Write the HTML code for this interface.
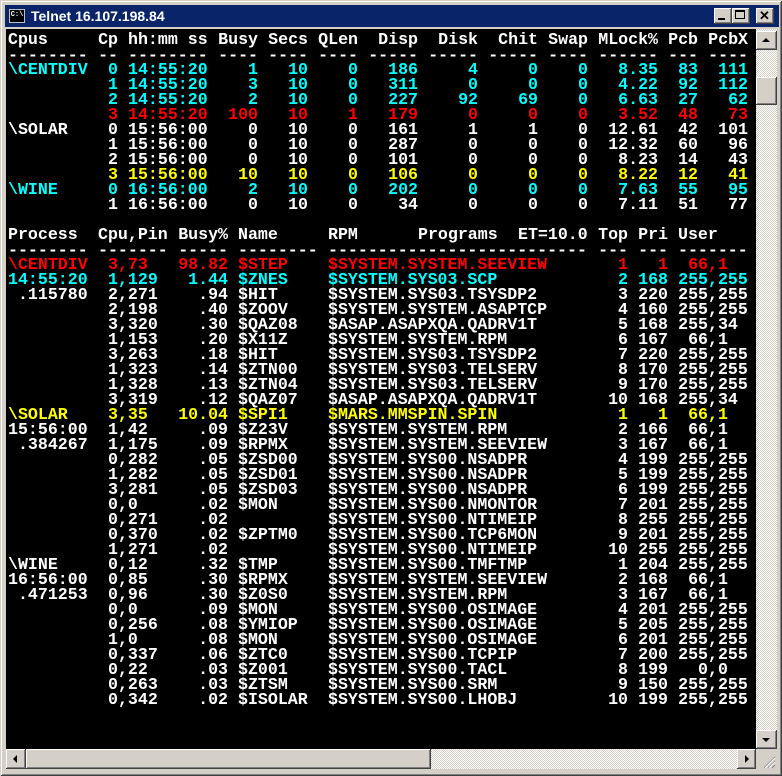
<!DOCTYPE html>
<html><head><meta charset="utf-8"><style>
*{margin:0;padding:0;box-sizing:border-box}
html,body{width:782px;height:776px;overflow:hidden;background:#d4d0c8;font-family:"Liberation Sans",sans-serif}
#win{position:absolute;left:0;top:0;width:782px;height:776px;background:#d4d0c8;border-top:1px solid #d4d0c8;border-left:1px solid #d4d0c8;box-shadow:inset -1px -1px 0 #404040,inset 1px 1px 0 #fff,inset -2px -2px 0 #808080}
#title{position:absolute;left:4px;top:4px;width:774px;height:22px;background:#0a246a}
#title .t{position:absolute;left:26px;top:3px;color:#fff;font-weight:bold;font-size:14px}
#icon{position:absolute;left:4px;top:4px;width:16px;height:14px;background:#000;border:1px solid #c0c0c0;color:#fff;font:bold 7px "Liberation Mono",monospace;line-height:11px;text-align:center}
.btn{position:absolute;top:3px;width:18px;height:16px;background:#d4d0c8;box-shadow:inset -1px -1px 0 #404040,inset 1px 1px 0 #fff,inset -2px -2px 0 #808080}
#term{position:absolute;left:5px;top:28px;width:750px;height:720px;background:#000;overflow:hidden;font-family:"Liberation Mono",monospace;font-weight:bold;font-size:16.6px;line-height:15px;color:#fff}
.r{position:absolute;left:0;height:15px;width:750px}
.r span{position:absolute;top:0;white-space:pre;height:15px}
.r.dash span{top:1px}
.C{color:#00ffff}.R{color:#ff0000}.Y{color:#ffff00}
.a{left:2px;width:90px}.b{left:92px;width:20px;text-align:right}.c{left:122px;width:80px}
.d{left:212px;width:40px;text-align:right}.e{left:262px;width:40px;text-align:right}.f{left:312px;width:40px;text-align:right}
.g{left:362px;width:50px;text-align:right}.h{left:422px;width:50px;text-align:right}.i{left:482px;width:50px;text-align:right}
.j{left:542px;width:40px;text-align:right}.k{left:592px;width:60px;text-align:right}.m{left:662px;width:30px;text-align:right}.n{left:702px;width:40px;text-align:right}
.p{left:2px;width:90px}.q{left:102px;width:60px}.q2{left:92px;width:70px}.s{left:172px;width:50px;text-align:right}
.u{left:232px;width:90px}.v{left:322px;width:260px}.pr{left:412px;width:80px}.et{left:512px;width:70px}
.w{left:592px;width:30px;text-align:right}.x{left:632px;width:30px;text-align:right}.y{left:672px;width:30px;text-align:right}.z{left:702px;width:40px}.uu{left:672px;width:70px}
#vs{position:absolute;left:755px;top:28px;width:21px;height:720px;background:#e8e6e2;background-image:repeating-conic-gradient(#d4d0c8 0 25%,#fff 0 50%);background-size:2px 2px}
#hs{position:absolute;left:5px;top:748px;width:750px;height:20px;background-image:repeating-conic-gradient(#d4d0c8 0 25%,#fff 0 50%);background-size:2px 2px}
.sb{position:absolute;background:#d4d0c8;box-shadow:inset -1px -1px 0 #404040,inset 1px 1px 0 #fff,inset -2px -2px 0 #808080}
.tri{position:absolute;width:0;height:0}
#grip{position:absolute;left:755px;top:748px;width:21px;height:20px;background:#d4d0c8}
</style></head><body>
<div id="win">
<div id="title"><div id="icon">C:\</div><div class="t">Telnet 16.107.198.84</div>
<div class="btn" style="left:709px"><div style="position:absolute;left:4px;top:10px;width:7px;height:2px;background:#000"></div></div>
<div class="btn" style="left:727px"><div style="position:absolute;left:3px;top:2px;width:10px;height:9px;border:1px solid #000;border-top-width:2px"></div></div>
<div class="btn" style="left:751px;width:18px"><div style="position:absolute;left:3px;top:0px;font:bold 13px 'Liberation Sans',sans-serif;color:#000">✕</div></div>
</div>

<div id="term">
<div class="r" style="top:3px"><span class="a">Cpus</span><span class="b">Cp</span><span class="c">hh:mm ss</span><span class="d">Busy</span><span class="e">Secs</span><span class="f">QLen</span><span class="g">Disp</span><span class="h">Disk</span><span class="i">Chit</span><span class="j">Swap</span><span class="k">MLock%</span><span class="m">Pcb</span><span class="n">PcbX</span></div>
<div class="r dash" style="top:18px"><span class="a">--------</span><span class="b">--</span><span class="c">--------</span><span class="d">----</span><span class="e">----</span><span class="f">----</span><span class="g">-----</span><span class="h">-----</span><span class="i">-----</span><span class="j">----</span><span class="k">------</span><span class="m">---</span><span class="n">----</span></div>
<div class="r C" style="top:33px"><span class="a">\CENTDIV</span><span class="b">0</span><span class="c">14:55:20</span><span class="d">1</span><span class="e">10</span><span class="f">0</span><span class="g">186</span><span class="h">4</span><span class="i">0</span><span class="j">0</span><span class="k">8.35</span><span class="m">83</span><span class="n">111</span></div>
<div class="r C" style="top:48px"><span class="b">1</span><span class="c">14:55:20</span><span class="d">3</span><span class="e">10</span><span class="f">0</span><span class="g">311</span><span class="h">0</span><span class="i">0</span><span class="j">0</span><span class="k">4.22</span><span class="m">92</span><span class="n">112</span></div>
<div class="r C" style="top:63px"><span class="b">2</span><span class="c">14:55:20</span><span class="d">2</span><span class="e">10</span><span class="f">0</span><span class="g">227</span><span class="h">92</span><span class="i">69</span><span class="j">0</span><span class="k">6.63</span><span class="m">27</span><span class="n">62</span></div>
<div class="r R" style="top:78px"><span class="b">3</span><span class="c">14:55:20</span><span class="d">100</span><span class="e">10</span><span class="f">1</span><span class="g">179</span><span class="h">0</span><span class="i">0</span><span class="j">0</span><span class="k">3.52</span><span class="m">48</span><span class="n">73</span></div>
<div class="r" style="top:93px"><span class="a">\SOLAR</span><span class="b">0</span><span class="c">15:56:00</span><span class="d">0</span><span class="e">10</span><span class="f">0</span><span class="g">161</span><span class="h">1</span><span class="i">1</span><span class="j">0</span><span class="k">12.61</span><span class="m">42</span><span class="n">101</span></div>
<div class="r" style="top:108px"><span class="b">1</span><span class="c">15:56:00</span><span class="d">0</span><span class="e">10</span><span class="f">0</span><span class="g">287</span><span class="h">0</span><span class="i">0</span><span class="j">0</span><span class="k">12.32</span><span class="m">60</span><span class="n">96</span></div>
<div class="r" style="top:123px"><span class="b">2</span><span class="c">15:56:00</span><span class="d">0</span><span class="e">10</span><span class="f">0</span><span class="g">101</span><span class="h">0</span><span class="i">0</span><span class="j">0</span><span class="k">8.23</span><span class="m">14</span><span class="n">43</span></div>
<div class="r Y" style="top:138px"><span class="b">3</span><span class="c">15:56:00</span><span class="d">10</span><span class="e">10</span><span class="f">0</span><span class="g">106</span><span class="h">0</span><span class="i">0</span><span class="j">0</span><span class="k">8.22</span><span class="m">12</span><span class="n">41</span></div>
<div class="r C" style="top:153px"><span class="a">\WINE</span><span class="b">0</span><span class="c">16:56:00</span><span class="d">2</span><span class="e">10</span><span class="f">0</span><span class="g">202</span><span class="h">0</span><span class="i">0</span><span class="j">0</span><span class="k">7.63</span><span class="m">55</span><span class="n">95</span></div>
<div class="r" style="top:168px"><span class="b">1</span><span class="c">16:56:00</span><span class="d">0</span><span class="e">10</span><span class="f">0</span><span class="g">34</span><span class="h">0</span><span class="i">0</span><span class="j">0</span><span class="k">7.11</span><span class="m">51</span><span class="n">77</span></div>

<div class="r" style="top:198px"><span class="p">Process</span><span class="q2">Cpu,Pin</span><span class="s">Busy%</span><span class="u">Name</span><span class="v">RPM</span><span class="pr">Programs</span><span class="et">ET=10.0</span><span class="w">Top</span><span class="x">Pri</span><span class="uu">User</span></div>
<div class="r dash" style="top:213px"><span class="p">--------</span><span class="q2">-------</span><span class="s">-----</span><span class="u">--------</span><span class="v">--------------------------</span><span class="w">---</span><span class="x">---</span><span class="uu">-------</span></div>
<div class="r R" style="top:228px"><span class="p">\CENTDIV</span><span class="q">3,73</span><span class="s">98.82</span><span class="u">$STEP</span><span class="v">$SYSTEM.SYSTEM.SEEVIEW</span><span class="w">1</span><span class="x">1</span><span class="y">66</span><span class="z">,1</span></div>
<div class="r C" style="top:243px"><span class="p">14:55:20</span><span class="q">1,129</span><span class="s">1.44</span><span class="u">$ZNES</span><span class="v">$SYSTEM.SYS03.SCP</span><span class="w">2</span><span class="x">168</span><span class="y">255</span><span class="z">,255</span></div>
<div class="r" style="top:258px"><span class="p"> .115780</span><span class="q">2,271</span><span class="s">.94</span><span class="u">$HIT</span><span class="v">$SYSTEM.SYS03.TSYSDP2</span><span class="w">3</span><span class="x">220</span><span class="y">255</span><span class="z">,255</span></div>
<div class="r" style="top:273px"><span class="q">2,198</span><span class="s">.40</span><span class="u">$ZOOV</span><span class="v">$SYSTEM.SYSTEM.ASAPTCP</span><span class="w">4</span><span class="x">160</span><span class="y">255</span><span class="z">,255</span></div>
<div class="r" style="top:288px"><span class="q">3,320</span><span class="s">.30</span><span class="u">$QAZ08</span><span class="v">$ASAP.ASAPXQA.QADRV1T</span><span class="w">5</span><span class="x">168</span><span class="y">255</span><span class="z">,34</span></div>
<div class="r" style="top:303px"><span class="q">1,153</span><span class="s">.20</span><span class="u">$X11Z</span><span class="v">$SYSTEM.SYSTEM.RPM</span><span class="w">6</span><span class="x">167</span><span class="y">66</span><span class="z">,1</span></div>
<div class="r" style="top:318px"><span class="q">3,263</span><span class="s">.18</span><span class="u">$HIT</span><span class="v">$SYSTEM.SYS03.TSYSDP2</span><span class="w">7</span><span class="x">220</span><span class="y">255</span><span class="z">,255</span></div>
<div class="r" style="top:333px"><span class="q">1,323</span><span class="s">.14</span><span class="u">$ZTN00</span><span class="v">$SYSTEM.SYS03.TELSERV</span><span class="w">8</span><span class="x">170</span><span class="y">255</span><span class="z">,255</span></div>
<div class="r" style="top:348px"><span class="q">1,328</span><span class="s">.13</span><span class="u">$ZTN04</span><span class="v">$SYSTEM.SYS03.TELSERV</span><span class="w">9</span><span class="x">170</span><span class="y">255</span><span class="z">,255</span></div>
<div class="r" style="top:363px"><span class="q">3,319</span><span class="s">.12</span><span class="u">$QAZ07</span><span class="v">$ASAP.ASAPXQA.QADRV1T</span><span class="w">10</span><span class="x">168</span><span class="y">255</span><span class="z">,34</span></div>
<div class="r Y" style="top:378px"><span class="p">\SOLAR</span><span class="q">3,35</span><span class="s">10.04</span><span class="u">$SPI1</span><span class="v">$MARS.MMSPIN.SPIN</span><span class="w">1</span><span class="x">1</span><span class="y">66</span><span class="z">,1</span></div>
<div class="r" style="top:393px"><span class="p">15:56:00</span><span class="q">1,42</span><span class="s">.09</span><span class="u">$Z23V</span><span class="v">$SYSTEM.SYSTEM.RPM</span><span class="w">2</span><span class="x">166</span><span class="y">66</span><span class="z">,1</span></div>
<div class="r" style="top:408px"><span class="p"> .384267</span><span class="q">1,175</span><span class="s">.09</span><span class="u">$RPMX</span><span class="v">$SYSTEM.SYSTEM.SEEVIEW</span><span class="w">3</span><span class="x">167</span><span class="y">66</span><span class="z">,1</span></div>
<div class="r" style="top:423px"><span class="q">0,282</span><span class="s">.05</span><span class="u">$ZSD00</span><span class="v">$SYSTEM.SYS00.NSADPR</span><span class="w">4</span><span class="x">199</span><span class="y">255</span><span class="z">,255</span></div>
<div class="r" style="top:438px"><span class="q">1,282</span><span class="s">.05</span><span class="u">$ZSD01</span><span class="v">$SYSTEM.SYS00.NSADPR</span><span class="w">5</span><span class="x">199</span><span class="y">255</span><span class="z">,255</span></div>
<div class="r" style="top:453px"><span class="q">3,281</span><span class="s">.05</span><span class="u">$ZSD03</span><span class="v">$SYSTEM.SYS00.NSADPR</span><span class="w">6</span><span class="x">199</span><span class="y">255</span><span class="z">,255</span></div>
<div class="r" style="top:468px"><span class="q">0,0</span><span class="s">.02</span><span class="u">$MON</span><span class="v">$SYSTEM.SYS00.NMONTOR</span><span class="w">7</span><span class="x">201</span><span class="y">255</span><span class="z">,255</span></div>
<div class="r" style="top:483px"><span class="q">0,271</span><span class="s">.02</span><span class="v">$SYSTEM.SYS00.NTIMEIP</span><span class="w">8</span><span class="x">255</span><span class="y">255</span><span class="z">,255</span></div>
<div class="r" style="top:498px"><span class="q">0,370</span><span class="s">.02</span><span class="u">$ZPTM0</span><span class="v">$SYSTEM.SYS00.TCP6MON</span><span class="w">9</span><span class="x">201</span><span class="y">255</span><span class="z">,255</span></div>
<div class="r" style="top:513px"><span class="q">1,271</span><span class="s">.02</span><span class="v">$SYSTEM.SYS00.NTIMEIP</span><span class="w">10</span><span class="x">255</span><span class="y">255</span><span class="z">,255</span></div>
<div class="r" style="top:528px"><span class="p">\WINE</span><span class="q">0,12</span><span class="s">.32</span><span class="u">$TMP</span><span class="v">$SYSTEM.SYS00.TMFTMP</span><span class="w">1</span><span class="x">204</span><span class="y">255</span><span class="z">,255</span></div>
<div class="r" style="top:543px"><span class="p">16:56:00</span><span class="q">0,85</span><span class="s">.30</span><span class="u">$RPMX</span><span class="v">$SYSTEM.SYSTEM.SEEVIEW</span><span class="w">2</span><span class="x">168</span><span class="y">66</span><span class="z">,1</span></div>
<div class="r" style="top:558px"><span class="p"> .471253</span><span class="q">0,96</span><span class="s">.30</span><span class="u">$Z0S0</span><span class="v">$SYSTEM.SYSTEM.RPM</span><span class="w">3</span><span class="x">167</span><span class="y">66</span><span class="z">,1</span></div>
<div class="r" style="top:573px"><span class="q">0,0</span><span class="s">.09</span><span class="u">$MON</span><span class="v">$SYSTEM.SYS00.OSIMAGE</span><span class="w">4</span><span class="x">201</span><span class="y">255</span><span class="z">,255</span></div>
<div class="r" style="top:588px"><span class="q">0,256</span><span class="s">.08</span><span class="u">$YMIOP</span><span class="v">$SYSTEM.SYS00.OSIMAGE</span><span class="w">5</span><span class="x">205</span><span class="y">255</span><span class="z">,255</span></div>
<div class="r" style="top:603px"><span class="q">1,0</span><span class="s">.08</span><span class="u">$MON</span><span class="v">$SYSTEM.SYS00.OSIMAGE</span><span class="w">6</span><span class="x">201</span><span class="y">255</span><span class="z">,255</span></div>
<div class="r" style="top:618px"><span class="q">0,337</span><span class="s">.06</span><span class="u">$ZTC0</span><span class="v">$SYSTEM.SYS00.TCPIP</span><span class="w">7</span><span class="x">200</span><span class="y">255</span><span class="z">,255</span></div>
<div class="r" style="top:633px"><span class="q">0,22</span><span class="s">.03</span><span class="u">$Z001</span><span class="v">$SYSTEM.SYS00.TACL</span><span class="w">8</span><span class="x">199</span><span class="y">0</span><span class="z">,0</span></div>
<div class="r" style="top:648px"><span class="q">0,263</span><span class="s">.03</span><span class="u">$ZTSM</span><span class="v">$SYSTEM.SYS00.SRM</span><span class="w">9</span><span class="x">150</span><span class="y">255</span><span class="z">,255</span></div>
<div class="r" style="top:663px"><span class="q">0,342</span><span class="s">.02</span><span class="u">$ISOLAR</span><span class="v">$SYSTEM.SYS00.LHOBJ</span><span class="w">10</span><span class="x">199</span><span class="y">255</span><span class="z">,255</span></div>
</div>

<div id="vs">
<div class="sb" style="left:0;top:2px;width:21px;height:19px"><div class="tri" style="left:6px;top:7px;border-left:4px solid transparent;border-right:4px solid transparent;border-bottom:4px solid #000"></div></div>
<div class="sb" style="left:0;top:48px;width:21px;height:28px"></div>
<div class="sb" style="left:0;top:701px;width:21px;height:19px"><div class="tri" style="left:6px;top:8px;border-left:4px solid transparent;border-right:4px solid transparent;border-top:4px solid #000"></div></div>
</div>
<div id="hs">
<div class="sb" style="left:0;top:0;width:20px;height:20px"><div class="tri" style="left:7px;top:6px;border-top:4px solid transparent;border-bottom:4px solid transparent;border-right:4px solid #000"></div></div>
<div class="sb" style="left:20px;top:0;width:405px;height:20px"></div>
<div class="sb" style="left:731px;top:0;width:19px;height:20px"><div class="tri" style="left:8px;top:6px;border-top:4px solid transparent;border-bottom:4px solid transparent;border-left:4px solid #000"></div></div>
</div>
<div id="grip"><svg width="21" height="20"><g stroke="#808080" stroke-width="1"><line x1="19" y1="8" x2="8" y2="19"/><line x1="19" y1="12" x2="12" y2="19"/><line x1="19" y1="16" x2="16" y2="19"/></g><g stroke="#fff"><line x1="19" y1="9" x2="9" y2="19"/><line x1="19" y1="13" x2="13" y2="19"/></g></svg></div>
</div>
</body></html>
